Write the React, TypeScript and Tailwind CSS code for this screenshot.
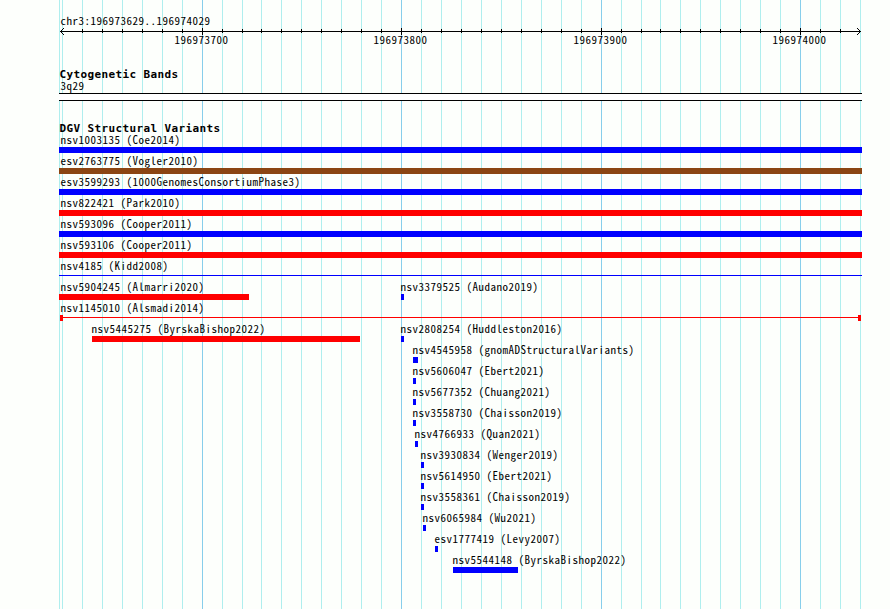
import React from 'react'
import clsx from 'clsx'

type variantType = {
  name: string
  x: number
  w: number
  color: string
  shape?: "line" | "span"
}

const BLUE = "bg-[#0000ff]"
const RED = "bg-[#ff0000]"
const BROWN = "bg-[#8b4513]"

// x is measured from the left edge of the track area
const rows: variantType[][] = [
  [{ name: "nsv1003135 (Coe2014)", x: 0, w: 803, color: BLUE }],
  [{ name: "esv2763775 (Vogler2010)", x: 0, w: 803, color: BROWN }],
  [{ name: "esv3599293 (1000GenomesConsortiumPhase3)", x: 0, w: 803, color: BLUE }],
  [{ name: "nsv822421 (Park2010)", x: 0, w: 803, color: RED }],
  [{ name: "nsv593096 (Cooper2011)", x: 0, w: 803, color: BLUE }],
  [{ name: "nsv593106 (Cooper2011)", x: 0, w: 803, color: RED }],
  [{ name: "nsv4185 (Kidd2008)", x: 0, w: 803, color: BLUE, shape: "line" }],
  [
    { name: "nsv5904245 (Almarri2020)", x: 0, w: 190, color: RED },
    { name: "nsv3379525 (Audano2019)", x: 342, w: 3, color: BLUE },
  ],
  [{ name: "nsv1145010 (Alsmadi2014)", x: 1, w: 801, color: RED, shape: "span" }],
  [
    { name: "nsv5445275 (ByrskaBishop2022)", x: 33, w: 268, color: RED },
    { name: "nsv2808254 (Huddleston2016)", x: 342, w: 3, color: BLUE },
  ],
  [{ name: "nsv4545958 (gnomADStructuralVariants)", x: 354, w: 5, color: BLUE }],
  [{ name: "nsv5606047 (Ebert2021)", x: 354, w: 3, color: BLUE }],
  [{ name: "nsv5677352 (Chuang2021)", x: 354, w: 3, color: BLUE }],
  [{ name: "nsv3558730 (Chaisson2019)", x: 354, w: 3, color: BLUE }],
  [{ name: "nsv4766933 (Quan2021)", x: 356, w: 3, color: BLUE }],
  [{ name: "nsv3930834 (Wenger2019)", x: 362, w: 3, color: BLUE }],
  [{ name: "nsv5614950 (Ebert2021)", x: 362, w: 3, color: BLUE }],
  [{ name: "nsv3558361 (Chaisson2019)", x: 362, w: 3, color: BLUE }],
  [{ name: "nsv6065984 (Wu2021)", x: 364, w: 3, color: BLUE }],
  [{ name: "esv1777419 (Levy2007)", x: 376, w: 3, color: BLUE }],
  [{ name: "nsv5544148 (ByrskaBishop2022)", x: 394, w: 65, color: BLUE }],
]

// one line every 10 bases, 196973630 to 196974030
const ticks = Array.from({ length: 41 }, (_, i) => ({
  x: Math.floor(143.12 + (i - 7) * 19.95),
  major: (i - 7) % 10 === 0,
  pos: 196973630 + i * 10,
}))

const Label = ({ children }: { children: React.ReactNode }) => (
  <div className="h-[13px] whitespace-pre pl-[0.6px] font-['Noto_Sans_CJK_JP',monospace] text-[11px] leading-[11px] tracking-[0.5px] [font-feature-settings:'hwid'] [font-kerning:none]">{children}</div>
)

const Title = ({ children }: { children: React.ReactNode }) => (
  <h2 className="h-3 whitespace-pre pl-[0.4px] font-['DejaVu_Sans_Mono',monospace] text-[11px] font-bold leading-[14px] tracking-[0.378px]">{children}</h2>
)

const GridLines = () => (
  <div className="absolute inset-y-0 left-[59px] w-[803px]">
    <div className="absolute inset-y-0 left-0 w-px bg-[#afeeee]" />
    {ticks.map((t) => (
      <div
        key={t.pos}
        className={clsx("absolute inset-y-0 w-px", t.major ? "bg-[#87ceeb]" : "bg-[#afeeee]")}
        style={{ left: t.x }}
      />
    ))}
  </div>
)

const Ruler = () => (
  <div className="relative h-[19px]">
    <svg width="803" height="8" className="block" shapeRendering="crispEdges">
      <rect x="1" y="4" width="801" height="1" />
      {ticks.slice(1, -1).map((t) => (
        <rect key={t.pos} x={t.x} y={t.major ? 1 : 2} width="1" height={t.major ? 7 : 4} />
      ))}
      <path d="M2 3h1v1h-1zM3 2h1v1h-1zM4 1h1v1h-1zM2 5h1v1h-1zM3 6h1v1h-1zM4 7h1v1h-1z" />
      <path d="M800 3h1v1h-1zM799 2h1v1h-1zM798 1h1v1h-1zM800 5h1v1h-1zM799 6h1v1h-1zM798 7h1v1h-1z" />
    </svg>
    {ticks.filter((t) => t.major).map((t) => (
      <div key={t.pos} className="absolute top-[7px]" style={{ left: t.x - 28 }}>
        <Label>{t.pos}</Label>
      </div>
    ))}
  </div>
)

const Glyph = ({ v }: { v: variantType }) => {
  if (v.shape === "line") {
    return <div className="h-1.5 pt-0.5"><div className={clsx("h-px", v.color)} style={{ width: v.w }} /></div>
  }
  if (v.shape === "span") {
    return (
      <div className="flex h-1.5" style={{ width: v.w }}>
        <div className={clsx("w-[3px]", v.color)} />
        <div className={clsx("mt-0.5 h-px flex-1", v.color)} />
        <div className={clsx("w-[3px]", v.color)} />
      </div>
    )
  }
  return <div className={clsx("h-1.5", v.color)} style={{ width: v.w }} />
}

const App = () => {
  return (
    <main className="relative h-[609px] w-[890px] overflow-hidden bg-[#fdfffc] text-black">
      <GridLines />
      <div className="relative ml-[59px] flex w-[803px] flex-col pt-[15px]">
        <div className="h-3 pl-px"><Label>chr3:196973629..196974029</Label></div>
        <Ruler />

        <section className="pt-[22px]">
          <Title>Cytogenetic Bands</Title>
          <div className="pl-px"><Label>3q29</Label></div>
          <div className="h-2 border-y border-black bg-white" />
        </section>

        <section className="pt-[21px]">
          <Title>DGV Structural Variants</Title>
          {rows.map((row, i) => (
            <div key={i} className="grid h-[21px]">
              {row.map((v) => (
                <div key={v.name} className="col-start-1 row-start-1" style={{ paddingLeft: v.x }}>
                  <div className={v.x > 1 ? "-ml-px" : v.x === 0 ? "pl-px" : ""}><Label>{v.name}</Label></div>
                  <Glyph v={v} />
                </div>
              ))}
            </div>
          ))}
        </section>
      </div>
    </main>
  )
}

export default App
